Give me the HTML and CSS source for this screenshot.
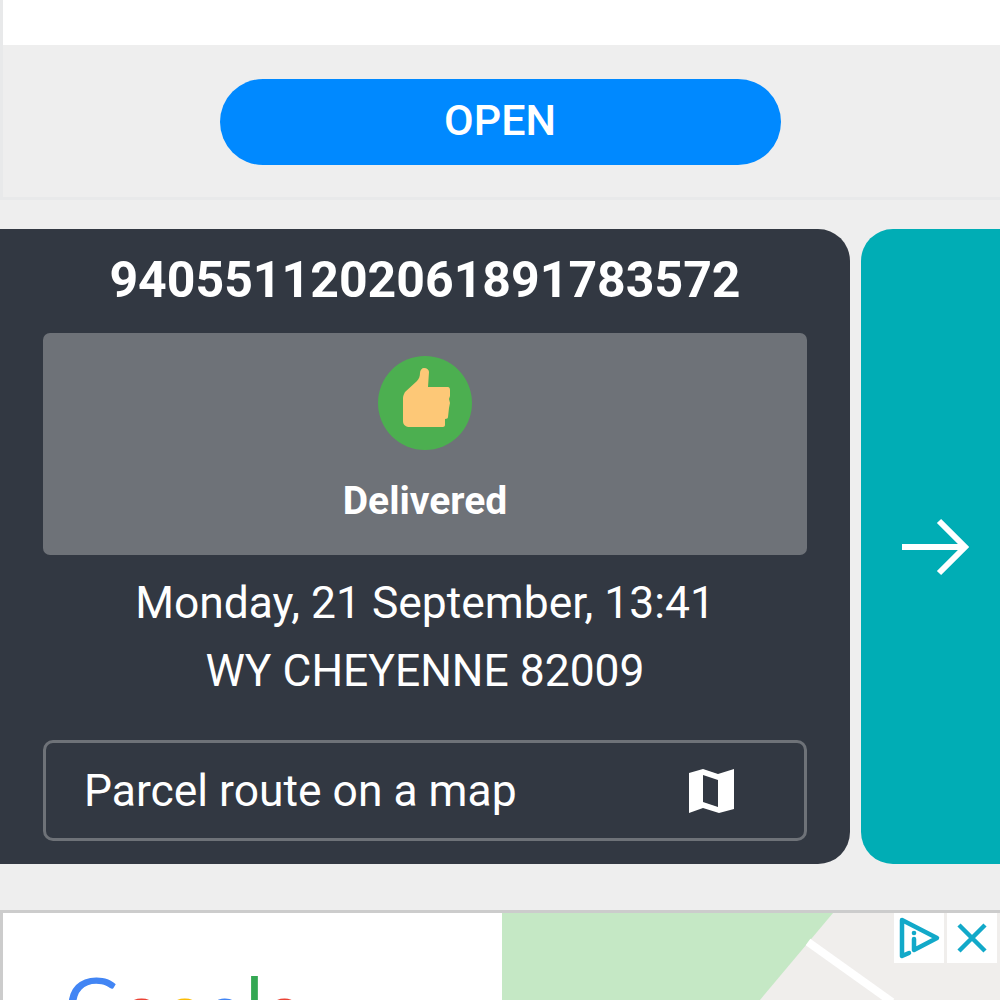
FILE: index.html
```html
<!DOCTYPE html>
<html lang="en">
<head>
    <meta charset="UTF-8">
    <meta name="viewport" content="width=device-width, initial-scale=1.0">
    <title>Parcel tracking</title>
    <link rel="stylesheet" href="styles.css">
</head>
<body>
    <!-- Open app block -->
    <div class="open-block">
        <div class="open-top"></div>
        <div class="open-row">
            <button class="open-btn">OPEN</button>
        </div>
    </div>

    <!-- Parcel card and next arrow -->
    <div class="cards">
        <div class="card">
            <div class="track-number">9405511202061891783572</div>
            <div class="status-box">
                <div class="status-icon">
                    <svg class="thumb" width="47" height="59" viewBox="0 0 47 59">
                        <path fill="#fdc877" d="M21 0c3 0 5 2 5 4l-1 15h20c1 0 2 1 2 3v6l-1 3 1 4-1 5-1 9c0 1-1 2-3 2v6c0 1-1 2-2 2H7c-4 0-7-2-7-6V30c0-2 1-4 2-6l12-11c2-2 3-5 3-8 0-3 2-5 4-5z"/>
                    </svg>
                </div>
                <div class="status-text">Delivered</div>
            </div>
            <div class="info-line first-line">Monday, 21 September, 13:41</div>
            <div class="info-line">WY CHEYENNE 82009</div>
            <div class="map-btn">
                <span>Parcel route on a map</span>
                <svg class="map-icon" width="46" height="46" viewBox="0 0 46 46">
                    <path fill="#fff" fill-rule="evenodd" d="M1 5l14-4 15 5 16-5v40l-15 4-16-5-14 5zM15 7v27l15 5V12z"/>
                </svg>
            </div>
        </div>
        <div class="next-card">
            <svg width="70" height="60" viewBox="0 0 70 60">
                <path fill="none" stroke="#fff" stroke-width="6" d="M1 29h62M38 3l26 26-26 26"/>
            </svg>
        </div>
    </div>

    <!-- Ad banner -->
    <div class="ad">
        <div class="ad-left">
            <div class="google">
                <span class="g-blue">G</span><span class="g-red g-low">o</span><span class="g-yellow g-low">o</span><span class="g-blue g-low">g</span><span class="g-green">l</span><span class="g-red g-low">e</span>
            </div>
        </div>
        <div class="ad-map">
            <svg class="map-bg" width="498" height="87" viewBox="0 0 498 87">
                <path fill="#c5e8c5" d="M0 0h331L258 87H0z"/>
                <path fill="none" stroke="#fff" stroke-width="8" d="M306 29l84 60"/>
            </svg>
            <div class="ad-icons">
                <div class="ad-icon">
                    <svg width="50" height="50" viewBox="0 0 50 50">
                        <path fill="none" stroke="#12a9c9" stroke-width="4.5" stroke-linejoin="round" stroke-linecap="round" d="M15 40l-7 3V7l35 18-23 12V26"/>
                        <circle cx="20" cy="20" r="2.3" fill="#12a9c9"/>
                    </svg>
                </div>
                <div class="ad-icon">
                    <svg width="50" height="50" viewBox="0 0 50 50">
                        <path fill="none" stroke="#12a9c9" stroke-width="4.5" d="M12 12l26 26M38 12L12 38"/>
                    </svg>
                </div>
            </div>
        </div>
    </div>
</body>
</html>
```

FILE: styles.css
```css
html, body {
    height: 1000px;
    overflow: hidden;
}

body {
    margin: 0;
    background-color: #eeeeee;
    font-family: Roboto, "Liberation Sans", sans-serif;
    color: #ffffff;
}

/* Bloque superior */
.open-block {
    height: 200px;
    box-sizing: border-box;
    border-left: 3px solid #e8e9ea;
    border-bottom: 3px solid #e8e9ea;
}

.open-top {
    height: 45px;
    background-color: #ffffff;
}

.open-row {
    display: flex;
    justify-content: center;
    padding-top: 34px;
    padding-right: 3px;
}

.open-btn {
    width: 561px;
    height: 86px;
    padding: 0 0 4px;
    border: none;
    border-radius: 43px;
    background-color: #0089ff;
    color: #ffffff;
    font-family: inherit;
    font-size: 43px;
    font-weight: 500;
}

/* Tarjetas */
.cards {
    display: flex;
    gap: 11px;
    height: 635px;
    margin-top: 29px;
}

.card {
    flex: 0 0 850px;
    box-sizing: border-box;
    padding: 0 43px;
    background-color: #323842;
    border-radius: 0 32px 32px 0;
    text-align: center;
}

.track-number {
    height: 104px;
    line-height: 103px;
    font-size: 50px;
    font-weight: 700;
    white-space: nowrap;
}

.status-box {
    height: 222px;
    box-sizing: border-box;
    padding-top: 23px;
    background-color: #6e7278;
    border-radius: 7px;
}

.status-icon {
    display: flex;
    align-items: center;
    justify-content: center;
    width: 94px;
    height: 94px;
    margin: 0 auto;
    background-color: #4caf50;
    border-radius: 50%;
}

.thumb {
    margin: 0 0 11px 2px;
}

.status-text {
    margin-top: 29px;
    font-size: 39px;
    font-weight: 700;
    line-height: 44px;
}

.info-line {
    height: 68px;
    line-height: 68px;
    font-size: 44.4px;
    white-space: nowrap;
}

.first-line {
    margin-top: 14px;
}

.map-btn {
    display: flex;
    align-items: center;
    justify-content: space-between;
    height: 101px;
    box-sizing: border-box;
    margin-top: 35px;
    padding: 0 70px 0 38px;
    border: 3px solid #6e7278;
    border-radius: 10px;
    font-size: 44.4px;
}

.next-card {
    display: flex;
    flex: 1;
    align-items: center;
    justify-content: flex-start;
    padding: 2px 0 0 40px;
    background-color: #00adb5;
    border-radius: 32px 0 0 32px;
}

/* Anuncio */
.ad {
    display: flex;
    height: 90px;
    margin-top: 46px;
    background-color: #ffffff;
    border-top: 3px solid #cccccc;
    border-left: 3px solid #cccccc;
}

.ad-left {
    flex: 0 0 499px;
    position: relative;
    overflow: hidden;
}

.google {
    position: absolute;
    left: 62px;
    top: 52px;
    font-family: Lato, sans-serif;
    font-size: 76px;
    line-height: 76px;
}

.g-low {
    position: relative;
    top: 5px;
}

.g-blue { color: #4285f4; }
.g-red { color: #ea4335; }
.g-yellow { color: #fbbc05; }
.g-green { color: #34a853; }

.ad-map {
    flex: 1;
    position: relative;
    background-color: #f0eeec;
    overflow: hidden;
}

.map-bg {
    display: block;
}

.ad-icons {
    position: absolute;
    top: 0;
    right: 3px;
    display: flex;
    gap: 3px;
}

.ad-icon {
    display: flex;
    align-items: center;
    justify-content: center;
    width: 50px;
    height: 50px;
    background-color: #ffffff;
}
```
